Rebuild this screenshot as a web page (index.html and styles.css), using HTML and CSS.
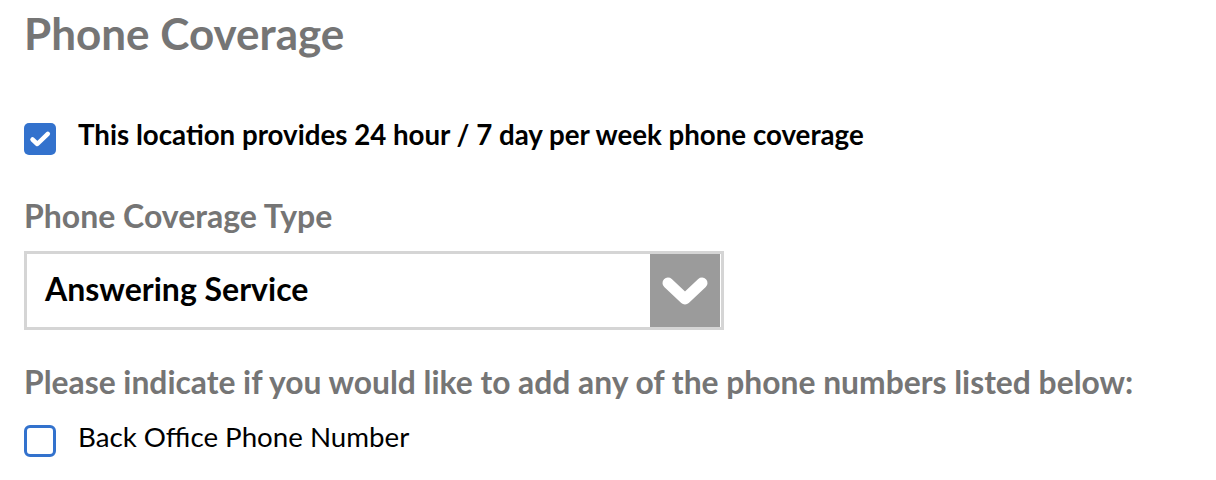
FILE: index.html
```
<!DOCTYPE html>
<html lang="en">
<head>
<meta charset="utf-8">
<title>Phone Coverage</title>
<link rel="stylesheet" href="styles.css">
</head>
<body>
<main class="page">
  <h1 class="title">Phone Coverage</h1>

  <label class="check-row check-row--main">
    <span class="box box--checked">
      <svg viewBox="0 0 32 32" width="32" height="32" aria-hidden="true">
        <path d="M8.5 16.5 L13.3 21 L23.8 10.8" fill="none" stroke="#fff" stroke-width="4.5" stroke-linecap="round" stroke-linejoin="round"/>
      </svg>
    </span>
    <span class="check-label check-label--bold">This location provides 24 hour / 7 day per week phone coverage</span>
  </label>

  <div class="field">
    <div class="field-label">Phone Coverage Type</div>
    <div class="select">
      <span class="select-value">Answering Service</span>
      <span class="select-arrow">
        <svg viewBox="0 0 70 72" width="70" height="72" aria-hidden="true">
          <path d="M18 28 L35 44 L52 28" fill="none" stroke="#fff" stroke-width="11" stroke-linecap="round" stroke-linejoin="round"/>
        </svg>
      </span>
    </div>
  </div>

  <div class="field field--list">
    <div class="field-label field-label--long">Please indicate if you would like to add any of the phone numbers listed below:</div>
    <label class="check-row check-row--list">
      <span class="box box--empty"></span>
      <span class="check-label">Back Office Phone Number</span>
    </label>
  </div>
</main>
</body>
</html>
```

FILE: styles.css
```
html, body {
  margin: 0;
  padding: 0;
  background: #ffffff;
}

body {
  font-family: Lato, "Noto Sans", "Liberation Sans", sans-serif;
  color: #000;
}

.page {
  padding: 7px 24px 0 24px;
  display: flex;
  flex-direction: column;
}

.title {
  margin: 0;
  font-size: 44px;
  font-weight: 700;
  color: #757575;
  line-height: 52px;
}

.check-row {
  display: flex;
  align-items: flex-start;
  gap: 22px;
}

.check-row--main {
  margin-top: 64px;
}

.box {
  width: 32px;
  height: 32px;
  box-sizing: border-box;
  border-radius: 5px;
  flex: none;
  display: flex;
}

.box--checked {
  background: #3372cd;
}

.box--empty {
  border: 3px solid #3372cd;
  border-radius: 6px;
}

.check-label {
  font-size: 27.7px;
  line-height: 24px;
}

.check-label--bold {
  font-weight: 700;
}

.field {
  margin-top: 42px;
  display: flex;
  flex-direction: column;
}

.field-label {
  font-size: 32px;
  font-weight: 700;
  color: #757575;
  line-height: 38px;
}

.field-label--long {
  font-size: 31.8px;
}

.select {
  margin-top: 16px;
  width: 700px;
  height: 79px;
  box-sizing: border-box;
  border: 3px solid #d5d5d5;
  display: flex;
  align-items: stretch;
  justify-content: space-between;
}

.select-value {
  font-size: 32px;
  font-weight: 700;
  align-self: center;
  padding: 0 0 4px 18px;
}

.select-arrow {
  width: 70px;
  background: #9b9b9b;
  display: flex;
  align-items: center;
  justify-content: center;
  margin-right: 1px;
}

.field--list {
  margin-top: 33px;
}

.check-row--list {
  margin-top: 24px;
}
```
